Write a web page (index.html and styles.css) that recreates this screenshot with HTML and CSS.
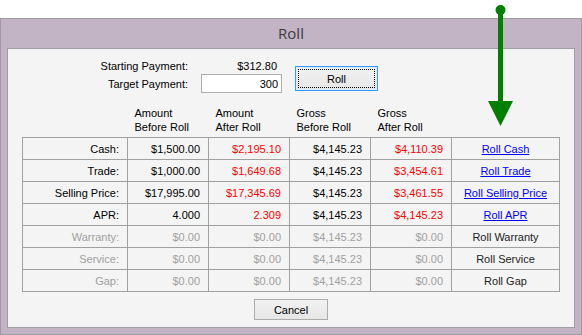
FILE: index.html
```html
<!DOCTYPE html>
<html lang="en">
<head>
    <meta charset="UTF-8">
    <meta name="viewport" content="width=device-width, initial-scale=1.0">
    <title>Roll</title>
    <link rel="stylesheet" href="styles.css">
</head>
<body>

<div class="window">
    <div class="title-bar">Roll</div>
    <div class="client">
        <div class="top">
            <div class="fields">
                <span class="field-label">Starting Payment:</span>
                <span class="field-value">$312.80</span>
                <label class="field-label" for="targetPayment">Target Payment:</label>
                <input type="text" id="targetPayment" class="field-input" value="300">
            </div>
            <button type="button" class="btn btn-roll">Roll</button>
        </div>

        <table class="roll-table">
            <colgroup>
                <col class="c-label">
                <col class="c-num">
                <col class="c-num">
                <col class="c-num">
                <col class="c-num">
                <col class="c-action">
            </colgroup>
            <thead>
                <tr>
                    <th></th>
                    <th>Amount<br>Before Roll</th>
                    <th>Amount<br>After Roll</th>
                    <th>Gross<br>Before Roll</th>
                    <th>Gross<br>After Roll</th>
                    <th></th>
                </tr>
            </thead>
            <tbody>
                <tr>
                    <td>Cash:</td>
                    <td>$1,500.00</td>
                    <td class="changed">$2,195.10</td>
                    <td>$4,145.23</td>
                    <td class="changed">$4,110.39</td>
                    <td class="action"><a href="#">Roll Cash</a></td>
                </tr>
                <tr>
                    <td>Trade:</td>
                    <td>$1,000.00</td>
                    <td class="changed">$1,649.68</td>
                    <td>$4,145.23</td>
                    <td class="changed">$3,454.61</td>
                    <td class="action"><a href="#">Roll Trade</a></td>
                </tr>
                <tr>
                    <td>Selling Price:</td>
                    <td>$17,995.00</td>
                    <td class="changed">$17,345.69</td>
                    <td>$4,145.23</td>
                    <td class="changed">$3,461.55</td>
                    <td class="action"><a href="#">Roll Selling Price</a></td>
                </tr>
                <tr>
                    <td>APR:</td>
                    <td>4.000</td>
                    <td class="changed">2.309</td>
                    <td>$4,145.23</td>
                    <td class="changed">$4,145.23</td>
                    <td class="action"><a href="#">Roll APR</a></td>
                </tr>
                <tr class="disabled">
                    <td>Warranty:</td>
                    <td>$0.00</td>
                    <td>$0.00</td>
                    <td>$4,145.23</td>
                    <td>$0.00</td>
                    <td class="action">Roll Warranty</td>
                </tr>
                <tr class="disabled">
                    <td>Service:</td>
                    <td>$0.00</td>
                    <td>$0.00</td>
                    <td>$4,145.23</td>
                    <td>$0.00</td>
                    <td class="action">Roll Service</td>
                </tr>
                <tr class="disabled">
                    <td>Gap:</td>
                    <td>$0.00</td>
                    <td>$0.00</td>
                    <td>$4,145.23</td>
                    <td>$0.00</td>
                    <td class="action">Roll Gap</td>
                </tr>
            </tbody>
        </table>

        <div class="bottom">
            <button type="button" class="btn btn-cancel">Cancel</button>
        </div>
    </div>
</div>

<!-- annotation arrow drawn over the dialog -->
<svg class="arrow" width="582" height="335" viewBox="0 0 582 335">
    <line x1="500.5" y1="10" x2="500.5" y2="103" stroke="#008000" stroke-width="5"/>
    <circle cx="500.5" cy="10" r="5" fill="#008000"/>
    <polygon points="488,101 513,101 500.5,126" fill="#008000"/>
</svg>

</body>
</html>
```

FILE: styles.css
```css
body {
    margin: 0;
    padding: 0;
    background-color: #fff;
    font-family: "Liberation Sans", Arial, sans-serif;
    font-size: 11px;
    color: #000;
    position: relative;
    width: 582px;
    height: 335px;
    overflow: hidden;
}

.window {
    margin-top: 18px;
    width: 582px;
    height: 317px;
    box-sizing: border-box;
    background-color: #c2b4c5;
    border: 1px solid #9e9a9f;
    padding: 0 6px 6px 6px;
}

.title-bar {
    height: 29px;
    line-height: 29px;
    text-align: center;
    font-family: "Open Sans", "Noto Sans", sans-serif;
    font-size: 15px;
    color: #3a3a3a;
}

.client {
    height: 280px;
    box-sizing: border-box;
    background-color: #f4f4f4;
    border: 1px solid #a29ca6;
}

.top {
    display: flex;
    padding: 8px 0 0 82px;
}

.fields {
    display: grid;
    grid-template-columns: 98px 81px;
    grid-template-rows: 17px 19px;
    column-gap: 13px;
    align-items: center;
}

.field-label {
    text-align: right;
}

.field-value {
    text-align: right;
    padding-right: 5px;
}

.field-input {
    box-sizing: border-box;
    width: 81px;
    height: 19px;
    margin: 0;
    border: 1px solid #abadb3;
    background-color: #fff;
    font-family: inherit;
    font-size: 11px;
    text-align: right;
    padding: 0 3px;
}

.btn {
    font-family: inherit;
    font-size: 11px;
    color: #000;
    background: linear-gradient(#f2f2f2, #e6e6e6);
    border: 1px solid #acacac;
    padding: 0;
    cursor: pointer;
}

.btn-roll {
    width: 83px;
    height: 25px;
    margin: 9px 0 0 13px;
    border-color: #3399ff;
    box-shadow: inset 0 0 0 1px #dcecfc;
    outline: 1px dotted #000;
    outline-offset: -4px;
}

.roll-table {
    margin: 13px 0 0 14px;
    border-collapse: collapse;
    table-layout: fixed;
    width: 538px;
}

.c-label {
    width: 105px;
}

.c-num {
    width: 81px;
}

.c-action {
    width: 108px;
}

.roll-table th {
    font-weight: normal;
    text-align: left;
    vertical-align: bottom;
    line-height: 14px;
    padding: 0 0 3px 7px;
    border: none;
}

.roll-table td {
    height: 21px;
    padding: 0 8px 0 0;
    text-align: right;
    vertical-align: middle;
    border: 1px solid #a0a0a0;
    white-space: nowrap;
}

.roll-table td.action {
    text-align: center;
    padding: 0;
}

.roll-table td.changed {
    color: #ff0000;
}

.roll-table a {
    color: #0000ff;
    text-decoration: underline;
}

.roll-table tr.disabled td {
    color: #a0a0a0;
}

.roll-table tr.disabled td.action {
    color: #222;
}

.bottom {
    display: flex;
    justify-content: center;
    padding-top: 7px;
}

.btn-cancel {
    width: 74px;
    height: 21px;
}

.arrow {
    position: absolute;
    left: 0;
    top: 0;
    pointer-events: none;
}
```
